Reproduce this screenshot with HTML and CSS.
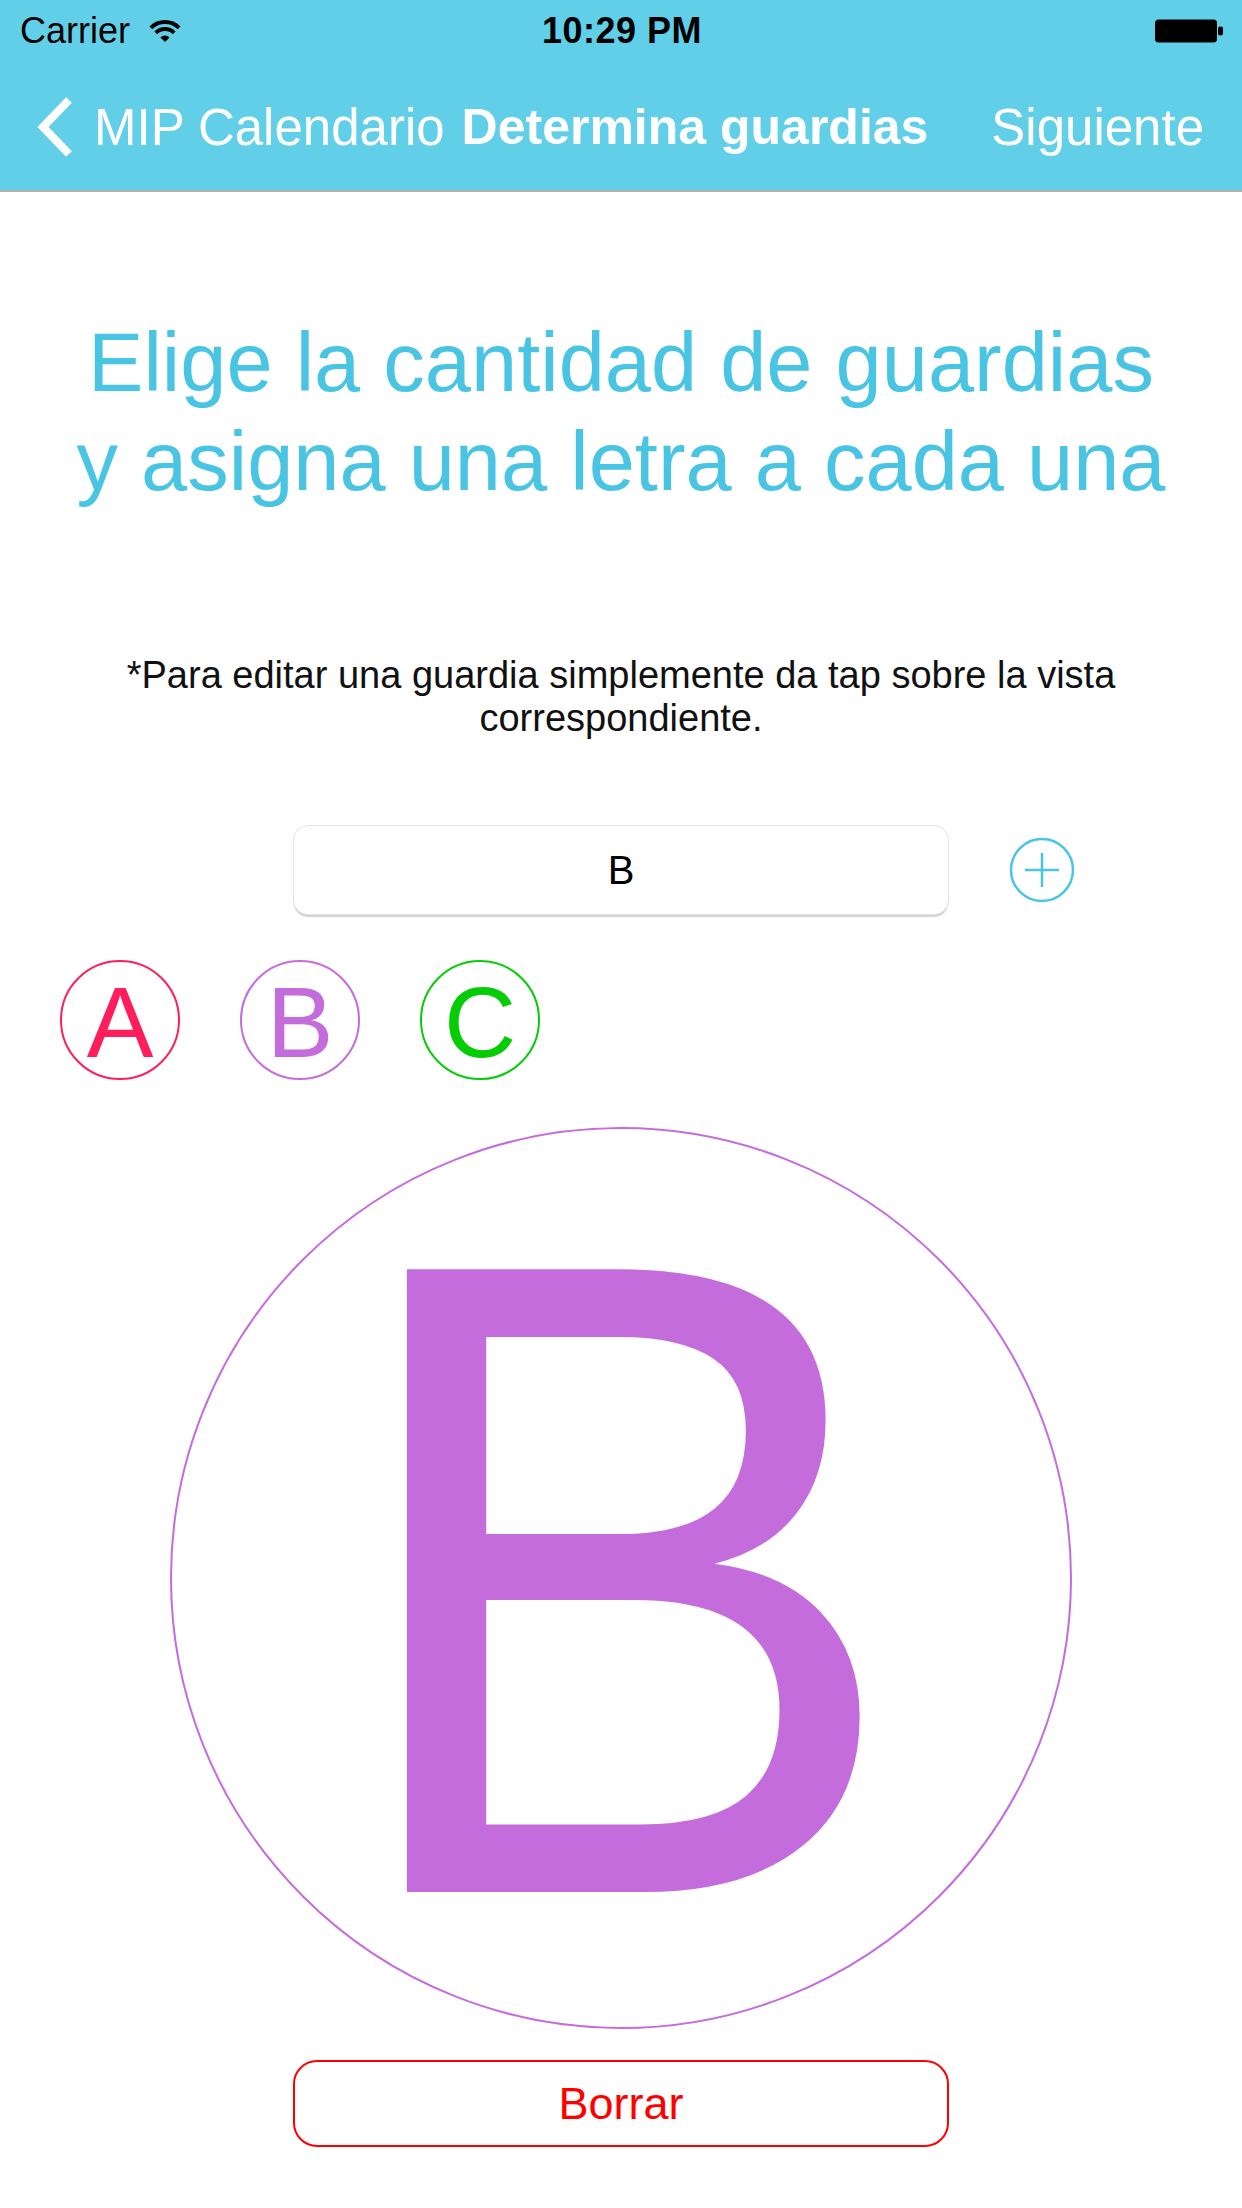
FILE: index.html
```html
<!DOCTYPE html>
<html lang="es">
<head>
<meta charset="utf-8">
<title>Determina guardias</title>
<link rel="stylesheet" href="styles.css">
</head>
<body>
<div class="screen">
  <header class="topbar">
    <div class="status">
      <div class="status-left">
        <span class="carrier">Carrier</span>
        <svg class="wifi" width="38" height="26" viewBox="0 0 38 26">
          <path d="M4.9 10.9 A20 20 0 0 1 33.1 10.9" fill="none" stroke="#000" stroke-width="4"/>
          <path d="M9.8 15.8 A13 13 0 0 1 28.2 15.8" fill="none" stroke="#000" stroke-width="4"/>
          <path d="M19 25 L14.4 20.4 A6.5 6.5 0 0 1 23.6 20.4 Z" fill="#000"/>
        </svg>
      </div>
      <div class="status-time">10:29 PM</div>
      <div class="status-right">
        <svg class="battery" width="70" height="24" viewBox="0 0 70 24">
          <rect x="1" y="0.5" width="62" height="23" rx="3.5" fill="#000"/>
          <rect x="64" y="7.5" width="5" height="9" rx="2" fill="#000"/>
        </svg>
      </div>
    </div>
    <nav class="navbar">
      <a class="back">
        <svg class="chevron" width="40" height="62" viewBox="0 0 40 62">
          <polyline points="33,4 7,31 33,58" fill="none" stroke="#fff" stroke-width="8" stroke-linejoin="miter"/>
        </svg>
        <span>MIP Calendario</span>
      </a>
      <h1 class="nav-title">Determina guardias</h1>
      <a class="nav-next">Siguiente</a>
    </nav>
  </header>

  <main class="content">
    <h2 class="headline">Elige la cantidad de guardias<br>y asigna una letra a cada una</h2>
    <p class="hint">*Para editar una guardia simplemente da tap sobre la vista correspondiente.</p>

    <div class="field-row">
      <div class="field">B</div>
      <button class="add" type="button">
        <svg width="66" height="66" viewBox="0 0 66 66">
          <circle cx="33" cy="33" r="31" fill="none" stroke="#4AC5E3" stroke-width="2.5"/>
          <line x1="16" y1="33" x2="50" y2="33" stroke="#4AC5E3" stroke-width="2.5"/>
          <line x1="33" y1="16" x2="33" y2="50" stroke="#4AC5E3" stroke-width="2.5"/>
        </svg>
      </button>
    </div>

    <div class="chips">
      <div class="chip chip-a"><span>A</span></div>
      <div class="chip chip-b"><span>B</span></div>
      <div class="chip chip-c"><span>C</span></div>
    </div>

    <div class="big-wrap">
      <div class="big"><span>B</span></div>
    </div>

    <button class="delete" type="button">Borrar</button>
  </main>
</div>
</body>
</html>
```
FILE: styles.css
```css
* { box-sizing: border-box; }

html, body {
  margin: 0;
  padding: 0;
  background: #ffffff;
}

body {
  font-family: "Liberation Sans", Arial, sans-serif;
  color: #000;
}

.screen {
  width: 1242px;
  height: 2208px;
  overflow: hidden;
  background: #fff;
}

/* ---------- top bar ---------- */
.topbar {
  background: #62CFE8;
  border-bottom: 2px solid #b0b0b0;
}

.status {
  height: 60px;
  display: grid;
  grid-template-columns: 1fr auto 1fr;
  align-items: center;
  padding: 2px 18px 0 20px;
  font-size: 36px;
}

.status-left {
  display: flex;
  align-items: center;
  gap: 16px;
}

.carrier { line-height: 1; }

.wifi { margin-top: -2px; }

.status-time {
  font-weight: 700;
  line-height: 1;
  letter-spacing: 0.5px;
}

.status-right {
  display: flex;
  justify-content: flex-end;
}

.navbar {
  height: 130px;
  display: flex;
  align-items: center;
  padding: 4px 38px 0 36px;
  color: #fff;
  font-size: 51px;
}

.back {
  display: flex;
  align-items: center;
  gap: 18px;
}

.nav-title {
  margin: 0 0 0 17px;
  font-size: 50px;
  font-weight: 700;
}

.nav-next {
  margin-left: auto;
}

/* ---------- content ---------- */
.content {
  display: flex;
  flex-direction: column;
  align-items: center;
}

.headline {
  margin: 121px 0 0;
  font-size: 83px;
  line-height: 99px;
  font-weight: 400;
  color: #49C5E3;
  text-align: center;
}

.hint {
  margin: 143px 0 0;
  max-width: 1080px;
  font-size: 38px;
  line-height: 43px;
  text-align: center;
  color: #111;
}

.field-row {
  margin-top: 85px;
  width: 100%;
  display: grid;
  grid-template-columns: 1fr 656px 1fr;
  align-items: center;
}

.field {
  grid-column: 2;
  height: 90px;
  border: 1px solid #e4e4e4;
  border-radius: 15px;
  box-shadow: 0 3px 1px -1px rgba(0, 0, 0, 0.18);
  display: flex;
  align-items: center;
  justify-content: center;
  font-size: 40px;
  color: #000;
  background: #fff;
}

.add {
  grid-column: 3;
  justify-self: start;
  margin-left: 60px;
  padding: 0;
  border: 0;
  background: none;
  width: 66px;
  height: 66px;
  display: block;
}

.add svg { display: block; }

.chips {
  margin-top: 45px;
  width: 100%;
  display: flex;
  gap: 60px;
  padding-left: 60px;
}

.chip {
  width: 120px;
  height: 120px;
  border-radius: 50%;
  border: 2.5px solid currentColor;
  display: flex;
  align-items: center;
  justify-content: center;
  font-size: 100px;
  line-height: 1;
}

.chip span { padding-top: 3px; }

.chip-a { color: #FF1E5C; }
.chip-b { color: #C56CDD; }
.chip-c { color: #05CC05; }

.big-wrap {
  margin-top: 47px;
}

.big {
  width: 902px;
  height: 902px;
  border-radius: 50%;
  border: 2.5px solid #C56CDD;
  color: #C56CDD;
  display: flex;
  align-items: center;
  justify-content: center;
  font-size: 905px;
  line-height: 1;
}

.big span {
  display: block;
  transform: scaleX(0.94);
}

.delete {
  margin-top: 31px;
  width: 656px;
  height: 87px;
  border: 2.5px solid #FF0000;
  border-radius: 24px;
  background: #fff;
  color: #FF0000;
  font-family: "Liberation Sans", Arial, sans-serif;
  font-size: 45px;
  padding: 0;
}
```
